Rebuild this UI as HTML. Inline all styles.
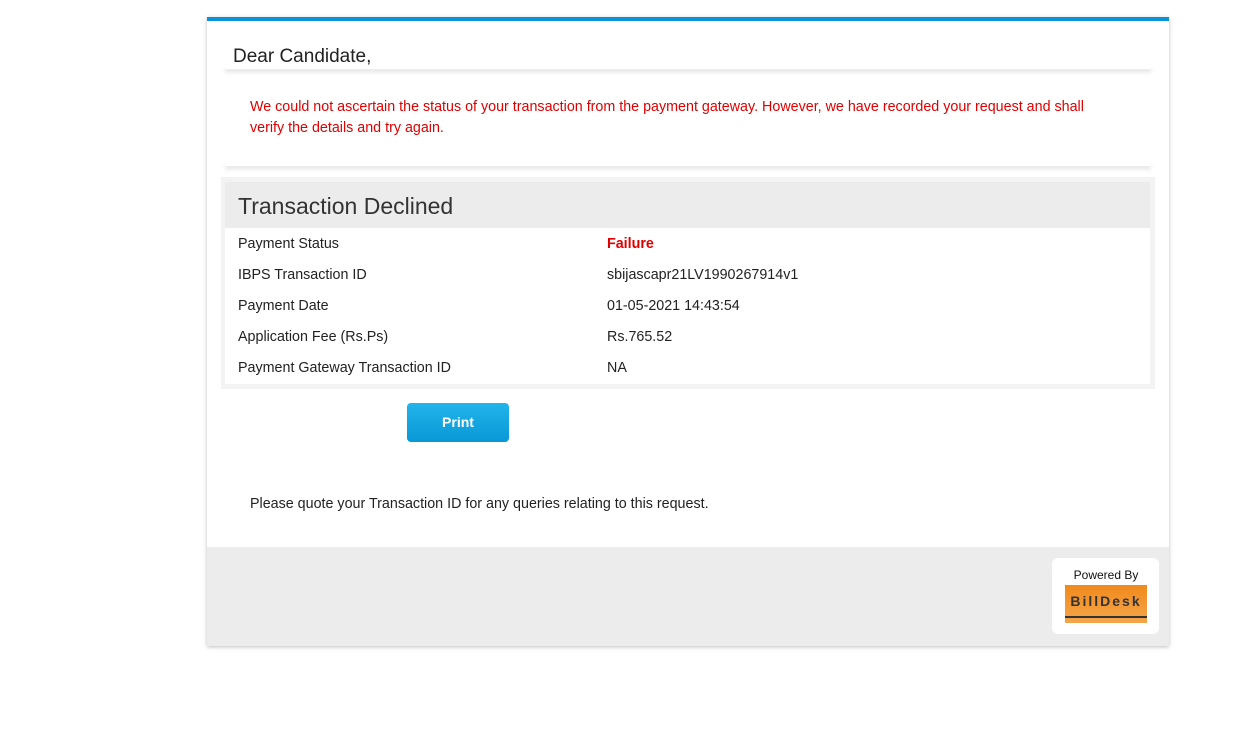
<!DOCTYPE html>
<html><head><style>
body{margin:0;background:#fff;font-family:"Liberation Sans",sans-serif;color:#222}
.wrap{position:absolute;left:207px;top:17px;width:962px;height:629px;box-shadow:0 1px 4px rgba(0,0,0,.25);background:#fff}
.top{height:4px;background:#0a94d6}
.dear{position:absolute;left:26px;top:29px;font-size:19px;color:#222}
.sh1{position:absolute;left:18px;top:48px;width:926px;height:4px;box-shadow:0 3px 4px rgba(0,0,0,.12)}
.msg{position:absolute;left:43px;top:80px;width:870px;font-size:14.3px;line-height:21px;color:#e00000}
.sh2{position:absolute;left:18px;top:145px;width:926px;height:4px;box-shadow:0 3px 4px rgba(0,0,0,.12)}
.box{position:absolute;left:14px;top:160px;width:934px;height:212px;background:#f3f3f3}
.hdr{position:absolute;left:4px;top:5px;width:925px;height:46px;background:#ececec;font-size:23px;line-height:48px;text-indent:13px;color:#333}
.rows{position:absolute;left:4px;top:51px;width:925px;height:156px;background:#fff}
.r{position:absolute;left:13px;font-size:14.3px;color:#222}
.v{position:absolute;left:382px;font-size:14.3px;color:#222}
.btn{position:absolute;left:200px;top:386px;width:102px;height:39px;border-radius:4px;background:linear-gradient(#22b4ea,#0898d6);color:#fff;font-weight:bold;font-size:14px;text-align:center;line-height:38px}
.q{position:absolute;left:43px;top:479px;font-size:14.3px;color:#222}
.foot{position:absolute;left:0;top:530px;width:962px;height:99px;background:#ececec}
.logo{position:absolute;left:845px;top:11px;width:107px;height:76px;background:#fff;border-radius:6px}
</style></head><body>
<div class="wrap">
<div class="top"></div>
<div class="dear">Dear Candidate,</div>
<div class="sh1"></div>
<div class="msg">We could not ascertain the status of your transaction from the payment gateway. However, we have recorded your request and shall verify the details and try again.</div>
<div class="sh2"></div>
<div class="box">
<div class="hdr">Transaction Declined</div>
<div class="rows">
<div class="r" style="top:8px">Payment Status</div><div class="v" style="top:8px;color:#e00000;font-weight:bold">Failure</div>
<div class="r" style="top:39px">IBPS Transaction ID</div><div class="v" style="top:39px">sbijascapr21LV1990267914v1</div>
<div class="r" style="top:70px">Payment Date</div><div class="v" style="top:70px">01-05-2021 14:43:54</div>
<div class="r" style="top:101px">Application Fee (Rs.Ps)</div><div class="v" style="top:101px">Rs.765.52</div>
<div class="r" style="top:132px">Payment Gateway Transaction ID</div><div class="v" style="top:132px">NA</div>
</div>
</div>
<div class="btn">Print</div>
<div class="q">Please quote your Transaction ID for any queries relating to this request.</div>
<div class="foot">
<div class="logo">
<div style="position:absolute;left:13px;top:10px;width:82px;text-align:center;font-size:12px;color:#111">Powered By</div>
<div style="position:absolute;left:13px;top:27px;width:82px;height:38px;background:linear-gradient(#f08a1c,#f5a54a)">
<div style="text-align:center;font-weight:bold;font-size:14px;letter-spacing:2px;color:#333;margin-top:8px">BillDesk</div>
<div style="position:absolute;left:0;bottom:5px;width:82px;height:2px;background:#333"></div>
</div>
</div>
</div>
</div>
</body></html>
